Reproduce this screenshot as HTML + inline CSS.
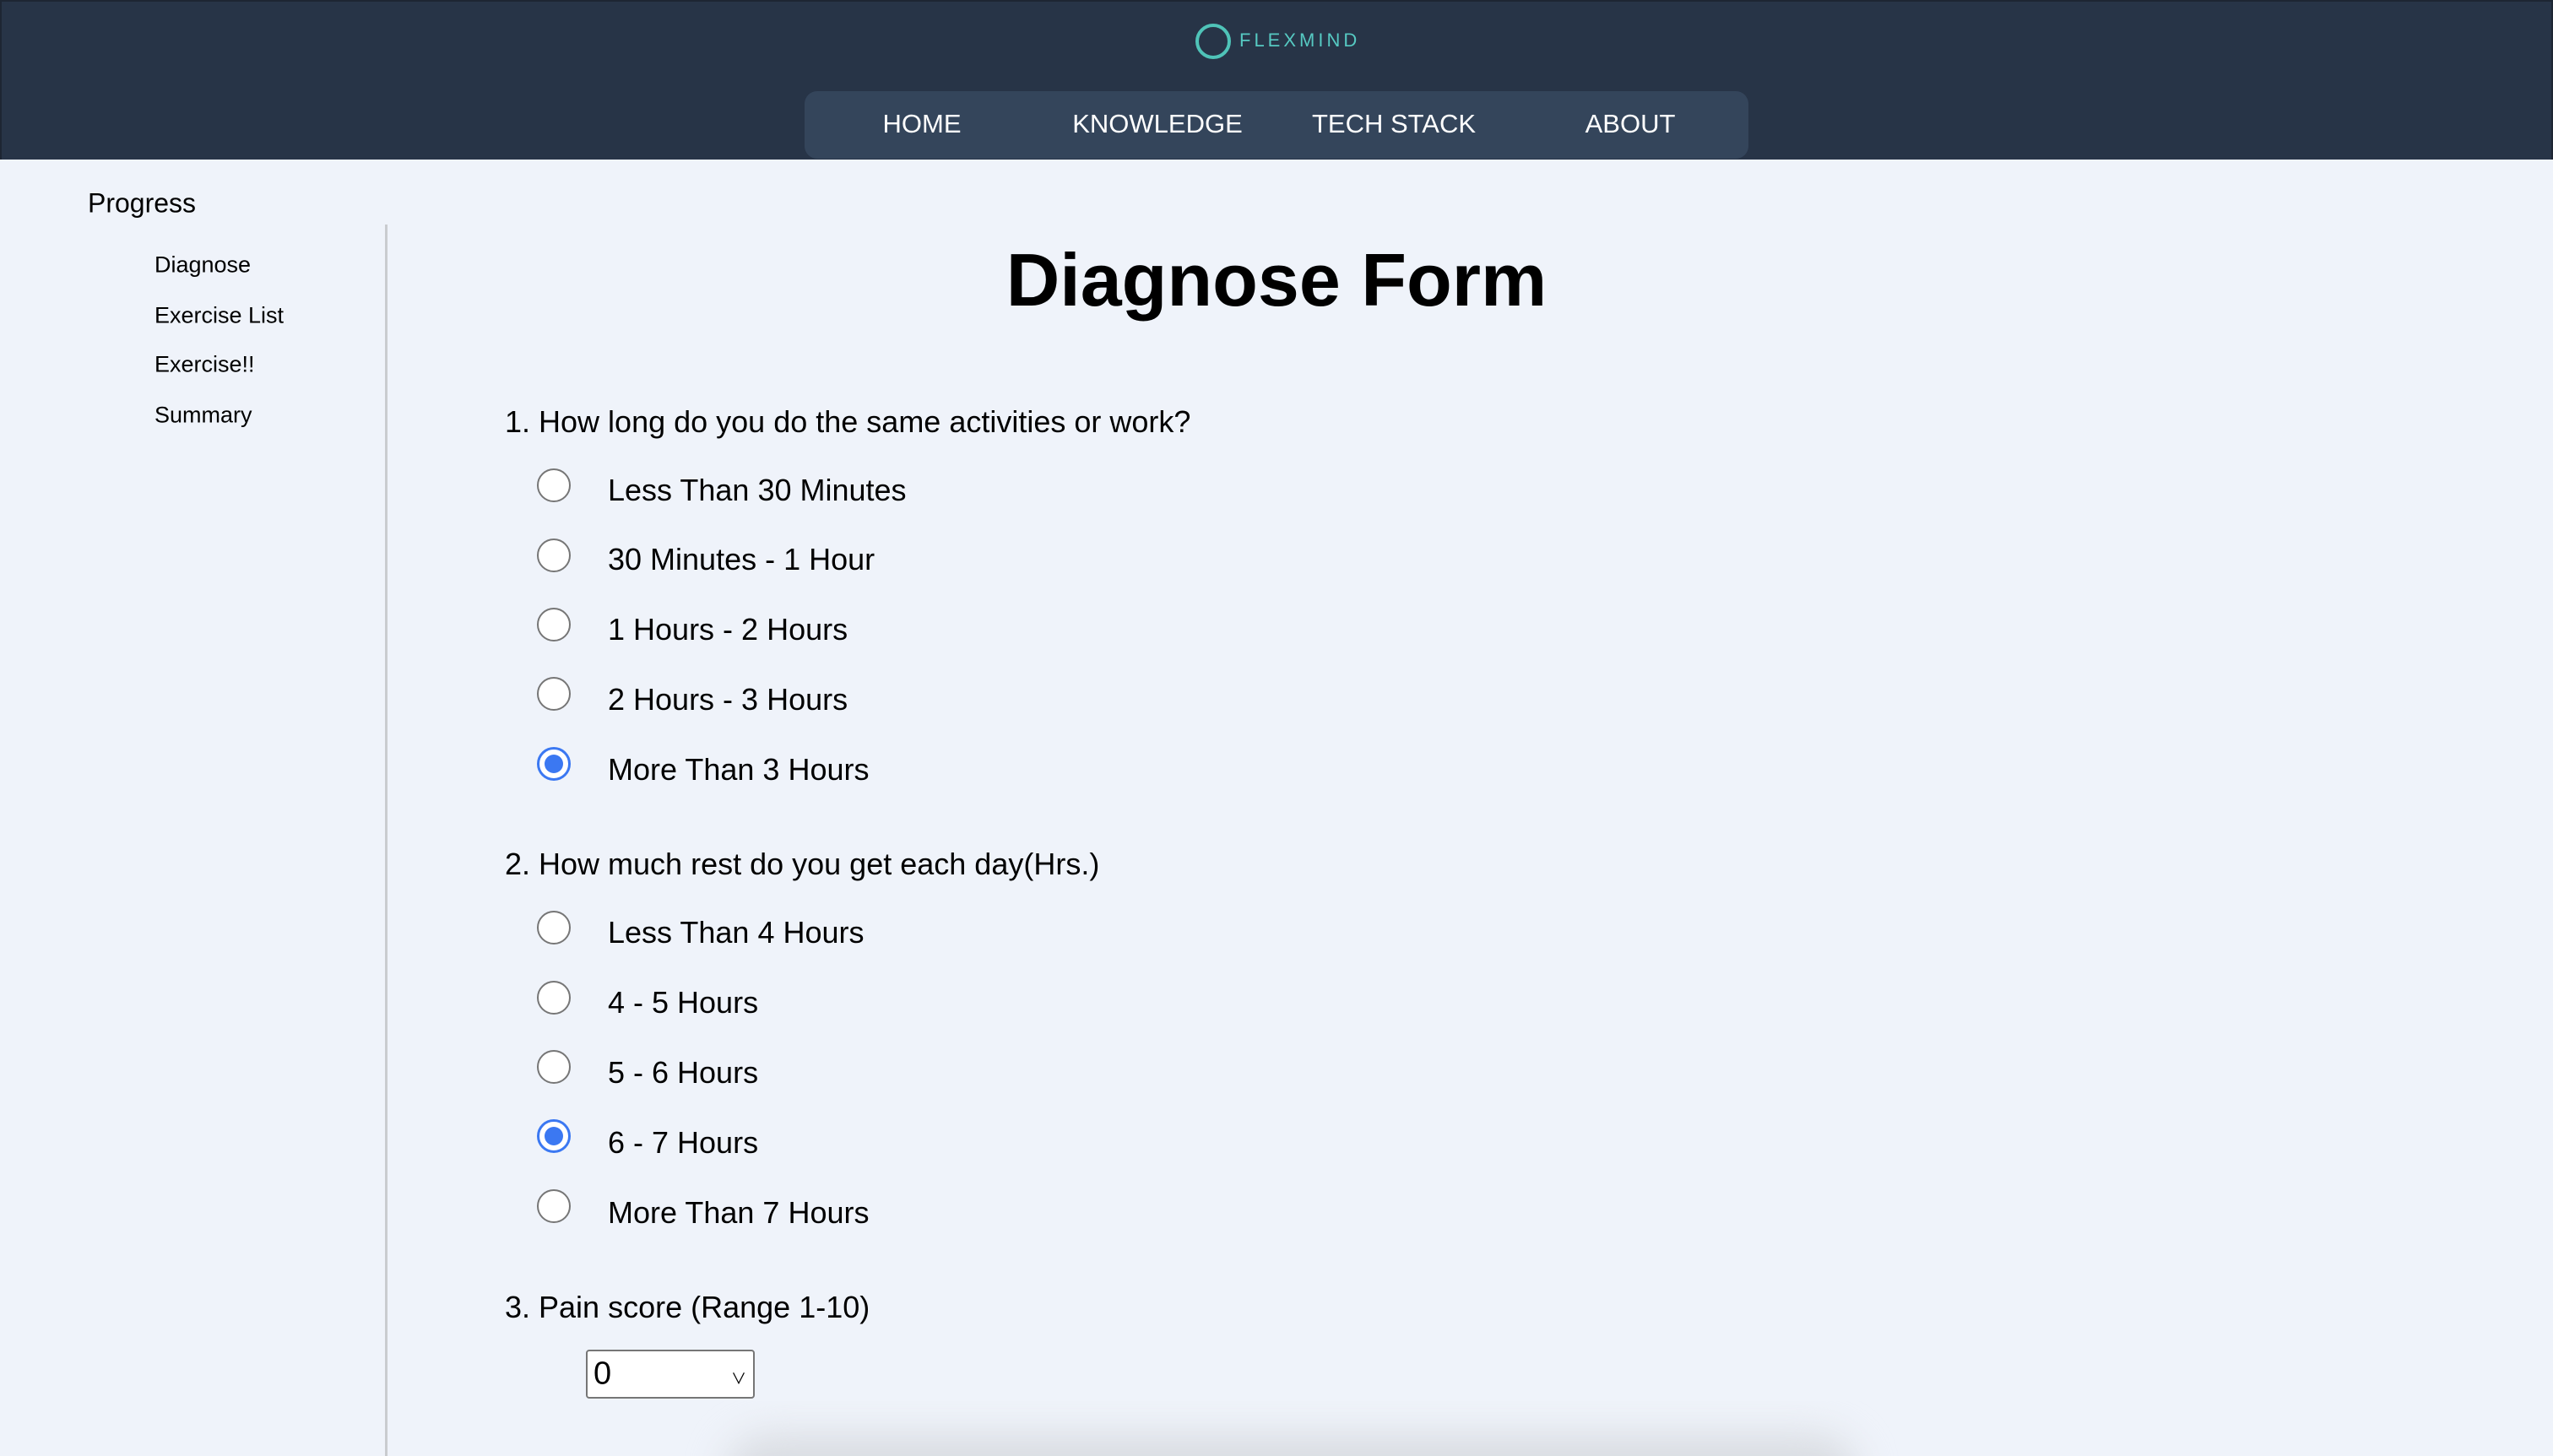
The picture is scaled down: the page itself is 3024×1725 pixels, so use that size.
<!DOCTYPE html>
<html><head><meta charset="utf-8"><style>
*{margin:0;padding:0;box-sizing:border-box}
html,body{width:3024px;height:1725px;overflow:hidden;background:#eff3fa;font-family:"Liberation Sans","Noto Sans CJK JP",sans-serif;color:#000}
body{position:relative}
.a{position:absolute;white-space:nowrap}
#hdr{position:absolute;left:0;top:0;width:3024px;height:189px;background:#273447;border:2px solid #1d2633;border-bottom:none}
#nav{position:absolute;left:953px;top:108px;width:1118px;height:80px;background:#34455b;border-radius:15px}
.nv{position:absolute;top:147px;transform:translate(-50%,-50%);color:#fff;font-size:31px}
.side{font-size:27px;left:183px;transform:translateY(-50%)}
.q{font-size:36px;left:598px;transform:translateY(-50%)}
.r{position:absolute;left:636px;width:40px;height:40px;border:2px solid #767676;border-radius:50%;background:#fff;transform:translateY(-50%)}
.r.on{border:3px solid #3b78f2}
.r.on::after{content:"";position:absolute;left:6px;top:6px;width:22px;height:22px;border-radius:50%;background:#3b78f2}
.l{font-size:36px;left:720px;transform:translateY(-50%)}
</style></head><body>
<div id="hdr"></div>
<svg class="a" style="left:1414px;top:26px" width="46" height="46" viewBox="0 0 46 46"><circle cx="23" cy="23" r="19" fill="none" stroke="#4fc3b8" stroke-width="4"/></svg>
<div class="a" style="left:1468px;top:35px;font-size:22px;letter-spacing:4px;color:#56c9c2">FLEXMIND</div>
<div id="nav"></div>
<div class="nv" style="left:1092px">HOME</div>
<div class="nv" style="left:1371px">KNOWLEDGE</div>
<div class="nv" style="left:1651px">TECH STACK</div>
<div class="nv" style="left:1931px">ABOUT</div>
<div class="a" style="left:104px;top:241px;transform:translateY(-50%);font-size:32px">Progress</div>
<div class="a side" style="top:314px">Diagnose</div>
<div class="a side" style="top:374px">Exercise List</div>
<div class="a side" style="top:432px">Exercise!!</div>
<div class="a side" style="top:492px">Summary</div>
<div class="a" style="left:456px;top:266px;width:3px;height:1459px;background:#c9cbcf"></div>
<div class="a" style="left:1512px;top:332px;transform:translate(-50%,-50%);font-size:88px;font-weight:bold">Diagnose Form</div>
<div class="a q" style="top:500px">1. How long do you do the same activities or work?</div>
<div class="r" style="top:575px"></div><div class="a l" style="top:581px">Less Than 30 Minutes</div>
<div class="r" style="top:658px"></div><div class="a l" style="top:663px">30 Minutes - 1 Hour</div>
<div class="r" style="top:740px"></div><div class="a l" style="top:746px">1 Hours - 2 Hours</div>
<div class="r" style="top:822px"></div><div class="a l" style="top:829px">2 Hours - 3 Hours</div>
<div class="r on" style="top:905px"></div><div class="a l" style="top:912px">More Than 3 Hours</div>
<div class="a q" style="top:1024px">2. How much rest do you get each day(Hrs.)</div>
<div class="r" style="top:1099px"></div><div class="a l" style="top:1105px">Less Than 4 Hours</div>
<div class="r" style="top:1182px"></div><div class="a l" style="top:1188px">4 - 5 Hours</div>
<div class="r" style="top:1264px"></div><div class="a l" style="top:1271px">5 - 6 Hours</div>
<div class="r on" style="top:1346px"></div><div class="a l" style="top:1354px">6 - 7 Hours</div>
<div class="r" style="top:1429px"></div><div class="a l" style="top:1437px">More Than 7 Hours</div>
<div class="a q" style="top:1549px">3. Pain score (Range 1-10)</div>
<div class="a" style="left:694px;top:1599px;width:200px;height:58px;background:#fff;border:2px solid #767676;border-radius:4px"></div>
<div class="a" style="left:703px;top:1628px;transform:translateY(-50%);font-size:38px">0</div>
<div class="a" style="left:866px;top:1620px;font-size:18px">&#x2228;</div>
<div style="position:absolute;left:0;top:1660px;width:3024px;height:65px;overflow:hidden">
<div class="a" style="left:860px;top:40px;width:1340px;height:100px;border-radius:50px;background:#d9dce1;filter:blur(22px)"></div>
</div>
</body></html>
